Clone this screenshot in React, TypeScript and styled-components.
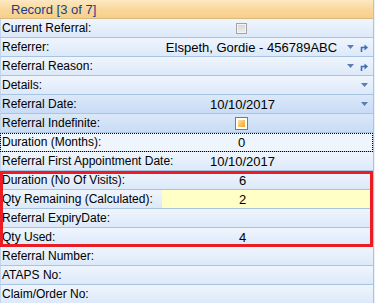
import React from 'react';
import styled, { createGlobalStyle, css } from 'styled-components';

const GlobalStyle = createGlobalStyle`
  html, body {
    margin: 0;
    padding: 0;
    background: #eaf1fb;
  }
  body {
    width: 375px;
    height: 303px;
    overflow: hidden;
    font-family: 'Liberation Sans', Arial, sans-serif;
  }
`;

const Panel = styled.div`
  width: 373px;
  border-right: 1px solid #a9c3e2;
`;

const Header = styled.div`
  height: 19px;
  box-sizing: border-box;
  padding-left: 11px;
  display: flex;
  align-items: center;
  background: linear-gradient(#fde8c2, #f9d597 60%, #f7cf8a);
  border-bottom: 1px solid #d9b982;
  color: #15428b;
  font-size: 13px;
`;

const Rows = styled.div`
  position: relative;
`;

type Tone = 'normal' | 'hot' | 'focus';

const Row = styled.div<{ $tone?: Tone }>`
  height: 19px;
  box-sizing: border-box;
  display: flex;
  border-bottom: 1px solid #a9c3e2;
  border-left: 1px solid #c3d6ee;
  background: linear-gradient(#eff5fd, #dde9f9);
  ${(p) =>
    p.$tone === 'hot' &&
    css`
      background: linear-gradient(#dbe8f9, #c8dcf5);
    `}
  ${(p) =>
    p.$tone === 'focus' &&
    css`
      background: #eef5fd;
      outline: 1px dotted #000;
      outline-offset: -1px;
    `}
`;

const Label = styled.div`
  width: 160px;
  flex: none;
  padding-left: 1px;
  display: flex;
  align-items: center;
  font-size: 12px;
  color: #000;
  white-space: nowrap;
`;

const Value = styled.div<{ $yellow?: boolean }>`
  flex: 1;
  display: flex;
  align-items: center;
  margin-right: 2px;
  ${(p) =>
    p.$yellow &&
    css`
      background: #ffffc6;
    `}
`;

const ValueText = styled.div<{ $pad: number }>`
  flex: 1;
  display: flex;
  justify-content: center;
  padding-right: ${(p) => p.$pad}px;
  font-size: 13px;
  color: #000;
  white-space: nowrap;
`;

const Buttons = styled.div`
  display: flex;
  align-items: center;
  flex: none;
`;

const IconButton = styled.span`
  width: 14px;
  height: 16px;
  display: flex;
  align-items: center;
  justify-content: center;
`;

const Box = styled.span<{ $checked?: boolean }>`
  width: 11px;
  height: 11px;
  box-sizing: border-box;
  display: inline-flex;
  align-items: center;
  justify-content: center;
  border: 1px solid #a3a3a3;
  background: #f4f4f4;
  ${(p) =>
    p.$checked &&
    css`
      width: 13px;
      height: 13px;
      border-color: #5a7fb6;
      background: #fff;
    `}
`;

const BoxInner = styled.span<{ $checked?: boolean }>`
  width: 7px;
  height: 7px;
  background: ${(p) =>
    p.$checked
      ? 'linear-gradient(135deg, #fde3a3, #f7b64a 70%, #f2a02e)'
      : 'linear-gradient(#d8d8d8, #ececec)'};
`;

const Highlight = styled.div`
  position: absolute;
  left: 0;
  top: 152px;
  width: 373px;
  height: 76px;
  box-sizing: border-box;
  border: 3px solid #ec1c24;
  pointer-events: none;
`;

const Arrow = () => (
  <svg width="7" height="4" viewBox="0 0 7 4">
    <polygon points="0,0 7,0 3.5,4" fill="#5a7db3" />
  </svg>
);

const GoIcon = () => (
  <svg width="10" height="10" viewBox="0 0 10 10">
    <path d="M2.5 10V5.5H6" fill="none" stroke="#3f6db5" strokeWidth="1.6" />
    <polygon points="5.5,2.5 9,5.5 5.5,8.5" fill="#3f6db5" />
  </svg>
);

const CheckBox: React.FC<{ checked?: boolean }> = ({ checked }) => (
  <Box $checked={checked}>
    <BoxInner $checked={checked} />
  </Box>
);

type Item = {
  label: string;
  value?: React.ReactNode;
  pad?: number;
  tone?: Tone;
  yellow?: boolean;
  arrow?: boolean;
  go?: boolean;
};

const items: Item[] = [
  { label: 'Current Referral:', value: <CheckBox />, pad: 50 },
  { label: 'Referrer:', value: 'Elspeth, Gordie - 456789ABC', pad: 2, arrow: true, go: true },
  { label: 'Referral Reason:', arrow: true, go: true },
  { label: 'Details:', arrow: true },
  { label: 'Referral Date:', value: '10/10/2017', pad: 34, tone: 'hot', arrow: true },
  { label: 'Referral Indefinite:', value: <CheckBox checked />, pad: 50, tone: 'hot' },
  { label: 'Duration (Months):', value: '0', pad: 50, tone: 'focus' },
  { label: 'Referral First Appointment Date:', value: '10/10/2017', pad: 48 },
  { label: 'Duration (No Of Visits):', value: '6', pad: 48 },
  { label: 'Qty Remaining (Calculated):', value: '2', pad: 48, yellow: true },
  { label: 'Referral ExpiryDate:' },
  { label: 'Qty Used:', value: '4', pad: 48 },
  { label: 'Referral Number:' },
  { label: 'ATAPS No:' },
  { label: 'Claim/Order No:' },
];

const App: React.FC = () => (
  <>
    <GlobalStyle />
    <Panel>
      <Header>Record [3 of 7]</Header>
      <Rows>
        {items.map((item) => (
          <Row key={item.label} $tone={item.tone}>
            <Label>{item.label}</Label>
            <Value $yellow={item.yellow}>
              <ValueText $pad={item.pad ?? 0}>{item.value}</ValueText>
              {(item.arrow || item.go) && (
                <Buttons>
                  {item.arrow && (
                    <IconButton>
                      <Arrow />
                    </IconButton>
                  )}
                  {item.go && (
                    <IconButton>
                      <GoIcon />
                    </IconButton>
                  )}
                </Buttons>
              )}
            </Value>
          </Row>
        ))}
        <Highlight />
      </Rows>
    </Panel>
  </>
);

export default App;
